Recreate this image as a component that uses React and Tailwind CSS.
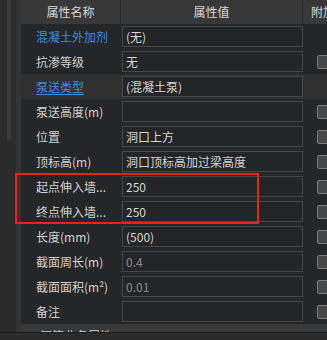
import React from 'react'

const rows = [
  { name: '混凝土外加剂', value: '(无)', link: true, check: false },
  { name: '抗渗等级', value: '无', check: true },
  { name: '泵送类型', value: '(混凝土泵)', link: true, underline: true, active: true, check: false },
  { name: '泵送高度(m)', value: '', check: true },
  { name: '位置', value: '洞口上方', check: true },
  { name: '顶标高(m)', value: '洞口顶标高加过梁高度', check: true },
  { name: '起点伸入墙...', value: '250', check: true },
  { name: '终点伸入墙...', value: '250', check: true },
  { name: '长度(mm)', value: '(500)', check: true },
  { name: '截面周长(m)', value: '0.4', muted: true, check: true },
  { name: '截面面积(m²)', value: '0.01', muted: true, check: true },
  { name: '备注', value: '', check: true },
]

function Row({ row }) {
  return (
    <div className={`grid h-[25px] grid-cols-[100px_182px_1fr] ${row.active ? 'bg-[#303030]' : ''}`}>
      <div
        className={`flex items-center truncate pl-[15px] ${
          row.link ? 'text-[#3a8ee6]' : 'text-[#d2d2d2]'
        } ${row.underline ? 'underline underline-offset-2' : ''}`}
      >
        {row.name}
      </div>
      <div className="flex items-center py-[2px] pl-[1px]">
        <div
          className={`flex h-[21px] w-[181px] items-center border border-[#474747] bg-[#242527] pl-[3px] ${
            row.muted ? 'text-[#8a8a8a]' : 'text-[#d6d6d6]'
          }`}
        >
          {row.value}
        </div>
      </div>
      <div className="flex items-center pl-[14px]">
        {row.check && <div className="h-[14px] w-[14px] shrink-0 rounded-[2px] border border-[#7e7e7e] bg-[#474747]" />}
      </div>
    </div>
  )
}

export default function App() {
  return (
    <div
      className="relative flex h-[340px] w-[327px] flex-col overflow-hidden bg-[#252628] text-[12px] leading-none"
      style={{ fontFamily: '"Noto Sans CJK SC", "Noto Sans", sans-serif' }}
    >
      <div className="flex h-[332px]">
        {/* Scrollbar strip */}
        <div className="flex w-[21px] shrink-0 bg-[#2b2b2b]">
          <div className="w-[7px]" />
          <div className="w-[4px]">
            <div className="h-[140px] bg-[#3a3a3a]" />
          </div>
          <div className="w-[5px]" />
          <div className="w-[5px] bg-[#343434]" />
        </div>

        {/* Property grid */}
        <div className="flex-1 overflow-hidden">
          <div className="grid h-[24px] grid-cols-[100px_182px_1fr] bg-[#383838] text-[#d8d8d8]">
            <div className="flex items-center justify-center border-r border-[#2c2c2c]">属性名称</div>
            <div className="flex items-center justify-center border-r border-[#2c2c2c]">属性值</div>
            <div className="flex items-center overflow-hidden whitespace-nowrap pl-[8px]">附加</div>
          </div>
          {rows.map((row) => (
            <Row key={row.name} row={row} />
          ))}
          <div className="flex h-[25px] items-start bg-[#383838] pt-[6px] text-[#d2d2d2]">
            <span className="pl-[8px] text-[9px]">▸</span>
            <span className="pl-[6px]">钢筋业务属性</span>
          </div>
        </div>
      </div>
      <div className="h-[1px] bg-[#1c1c1c]" />
      <div className="flex-1 bg-[#2b2b2b]" />

      {/* Annotation box */}
      <div className="absolute left-[15px] top-[173px] h-[51px] w-[244px] border-2 border-[#e8231e]" />
    </div>
  )
}
